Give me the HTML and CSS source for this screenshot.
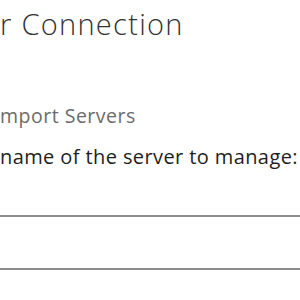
FILE: index.html
```html
<!DOCTYPE html>
<html lang="en">
<head>
    <meta charset="UTF-8">
    <title>Server Connection</title>
    <link rel="stylesheet" href="styles.css">
</head>
<body>
    <div class="dialog">
        <h1 class="title">r Connection</h1>
        <a class="import" href="#">mport Servers</a>
        <p class="label">name of the server to manage:</p>
        <div class="field"></div>
    </div>
</body>
</html>
```

FILE: styles.css
```css
body {
    margin: 0;
    background: #fff;
    overflow: hidden;
    font-family: 'Open Sans', 'Noto Sans', sans-serif;
}
.dialog {
    display: flex;
    flex-direction: column;
    padding-top: 5px;
}
.title {
    margin: 0;
    font-size: 29px;
    font-weight: 300;
    letter-spacing: 1.3px;
    line-height: 38px;
    color: #333;
}
.import {
    margin-top: 60px;
    font-size: 19.5px;
    letter-spacing: 0.5px;
    line-height: 26px;
    color: #6b6b6b;
    text-decoration: none;
}
.label {
    margin: 14px 0 0;
    font-size: 20px;
    letter-spacing: 0.4px;
    line-height: 28px;
    color: #1e1e1e;
}
.field {
    margin-top: 44px;
    height: 51px;
    border-top: 2px solid #8c8c8c;
    border-bottom: 2px solid #8c8c8c;
}
```
